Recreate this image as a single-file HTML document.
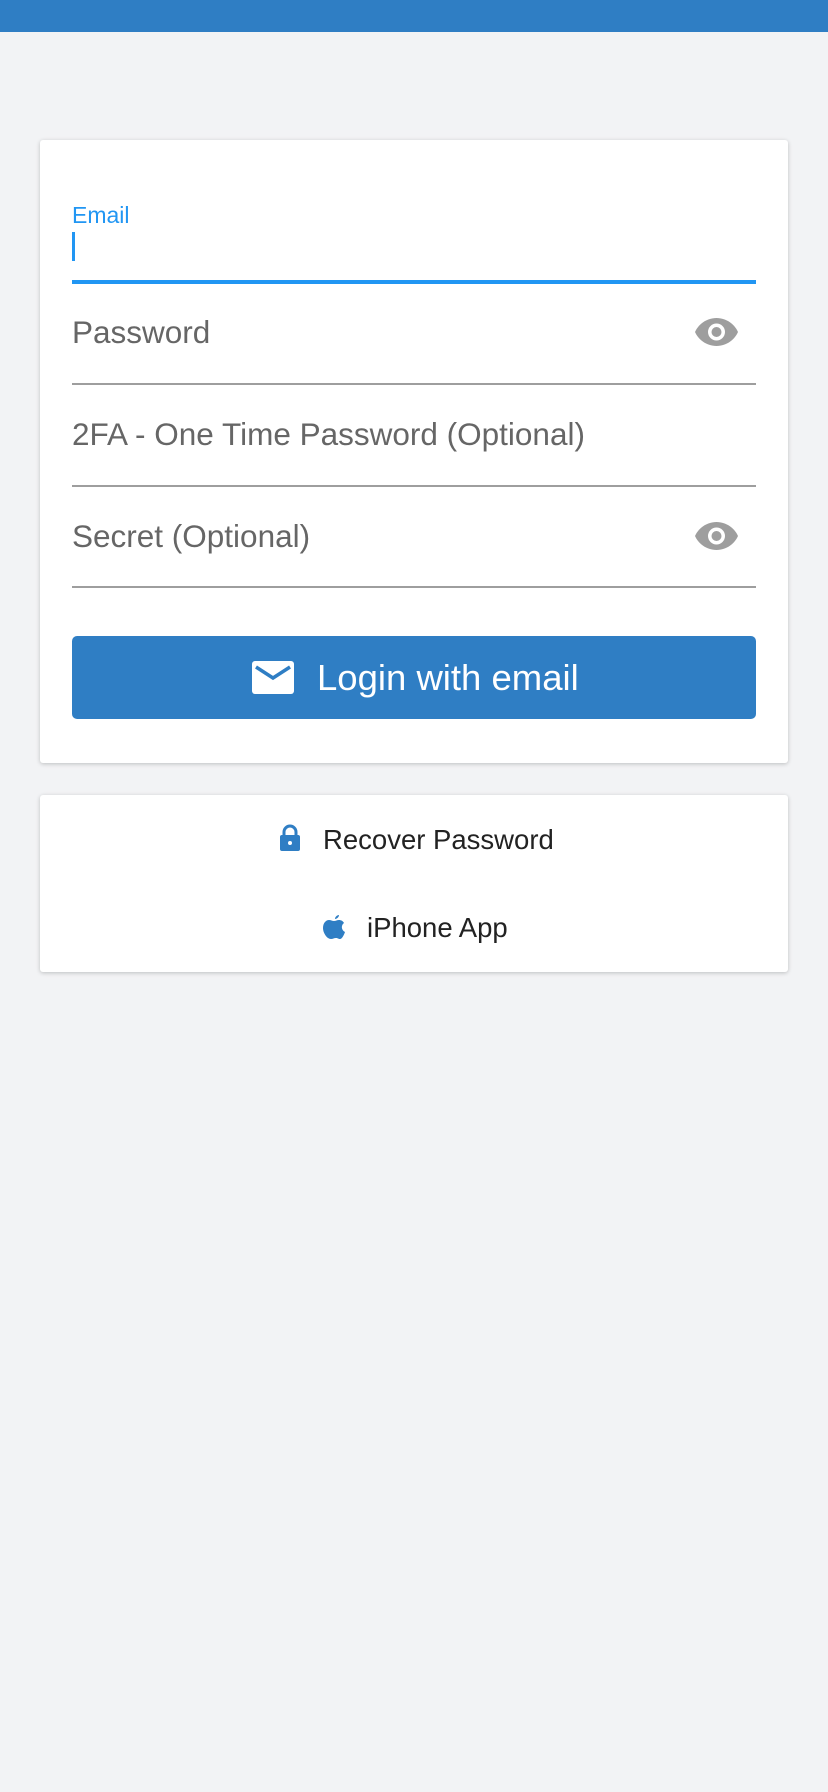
<!DOCTYPE html>
<html><head><meta charset="utf-8"><style>
*{box-sizing:border-box;margin:0;padding:0}
body{width:828px;height:1792px;background:#f2f3f5;font-family:"Liberation Sans",sans-serif;position:relative;overflow:hidden}
.top{position:absolute;left:0;top:0;width:828px;height:32px;background:#2f7ec4}
.card{position:absolute;left:40px;width:748px;background:#fff;border-radius:3px;box-shadow:0 1px 4px rgba(0,0,0,.22)}
.abs{position:absolute}
.ph{position:absolute;left:72px;font-size:31.5px;color:#666}
.line{position:absolute;left:72px;width:684px;height:2px;background:#9e9e9e}
</style></head><body>
<div class="top"></div>
<div class="card" style="top:140px;height:623px"></div>
<div class="abs" style="left:72px;top:202px;font-size:23px;color:#2196f3">Email</div>
<div class="abs" style="left:72px;top:232px;width:3px;height:29px;background:#2196f3"></div>
<div class="abs" style="left:72px;top:280px;width:684px;height:4px;background:#2196f3"></div>
<div class="ph" style="top:314px">Password</div>
<svg class="abs" style="left:694px;top:317px" width="45" height="30" viewBox="0 0 45 30"><path d="M22.5 1C12 1 4 8 1 15c3 7 11 14 21.5 14S41 22 44 15C41 8 33 1 22.5 1z" fill="#9e9e9e"/><circle cx="22.5" cy="15" r="8.5" fill="#fff"/><circle cx="22.5" cy="15" r="5" fill="#9e9e9e"/></svg>
<div class="line" style="top:383px"></div>
<div class="ph" style="top:416px">2FA - One Time Password (Optional)</div>
<div class="line" style="top:485px"></div>
<div class="ph" style="top:518px">Secret (Optional)</div>
<svg class="abs" style="left:694px;top:521px" width="45" height="30" viewBox="0 0 45 30"><path d="M22.5 1C12 1 4 8 1 15c3 7 11 14 21.5 14S41 22 44 15C41 8 33 1 22.5 1z" fill="#9e9e9e"/><circle cx="22.5" cy="15" r="8.5" fill="#fff"/><circle cx="22.5" cy="15" r="5" fill="#9e9e9e"/></svg>
<div class="line" style="top:586px"></div>
<div class="abs" style="left:72px;top:636px;width:684px;height:83px;background:#2f7ec4;border-radius:5px"></div>
<svg class="abs" style="left:252px;top:661px" width="42" height="33" viewBox="0 0 42 33"><rect x="0" y="0" width="42" height="33" rx="3" fill="#fff"/><path d="M4 6l17 11 17-11" stroke="#2f7ec4" stroke-width="3.5" fill="none"/></svg>
<div class="abs" style="left:317px;top:657px;font-size:36.5px;color:#fff">Login with email</div>
<div class="card" style="top:795px;height:177px"></div>
<svg class="abs" style="left:279px;top:824px" width="22" height="28" viewBox="0 0 22 28"><path d="M5 12V8a6 6 0 0112 0v4" stroke="#2f7ec4" stroke-width="3" fill="none"/><rect x="1" y="11" width="20" height="16" rx="2" fill="#2f7ec4"/><circle cx="11" cy="19" r="2" fill="#fff"/></svg>
<div class="abs" style="left:323px;top:824px;font-size:27.5px;color:#222">Recover Password</div>
<svg class="abs" style="left:322px;top:913px" width="24" height="28" viewBox="0 0 24 28"><path d="M17 2c0 2-2 4-4 4 0-2 2-4 4-4zM12 8c2 0 3-1 5-1 2 0 4 1 5 3-3 2-3 7 1 9-1 3-3 7-5 7-2 0-2-1-4-1s-3 1-5 1C5 26 1 20 1 15s3-8 6-8c2 0 3 1 5 1z" fill="#2f7ec4"/></svg>
<div class="abs" style="left:367px;top:912px;font-size:27.5px;color:#222">iPhone App</div>
</body></html>
